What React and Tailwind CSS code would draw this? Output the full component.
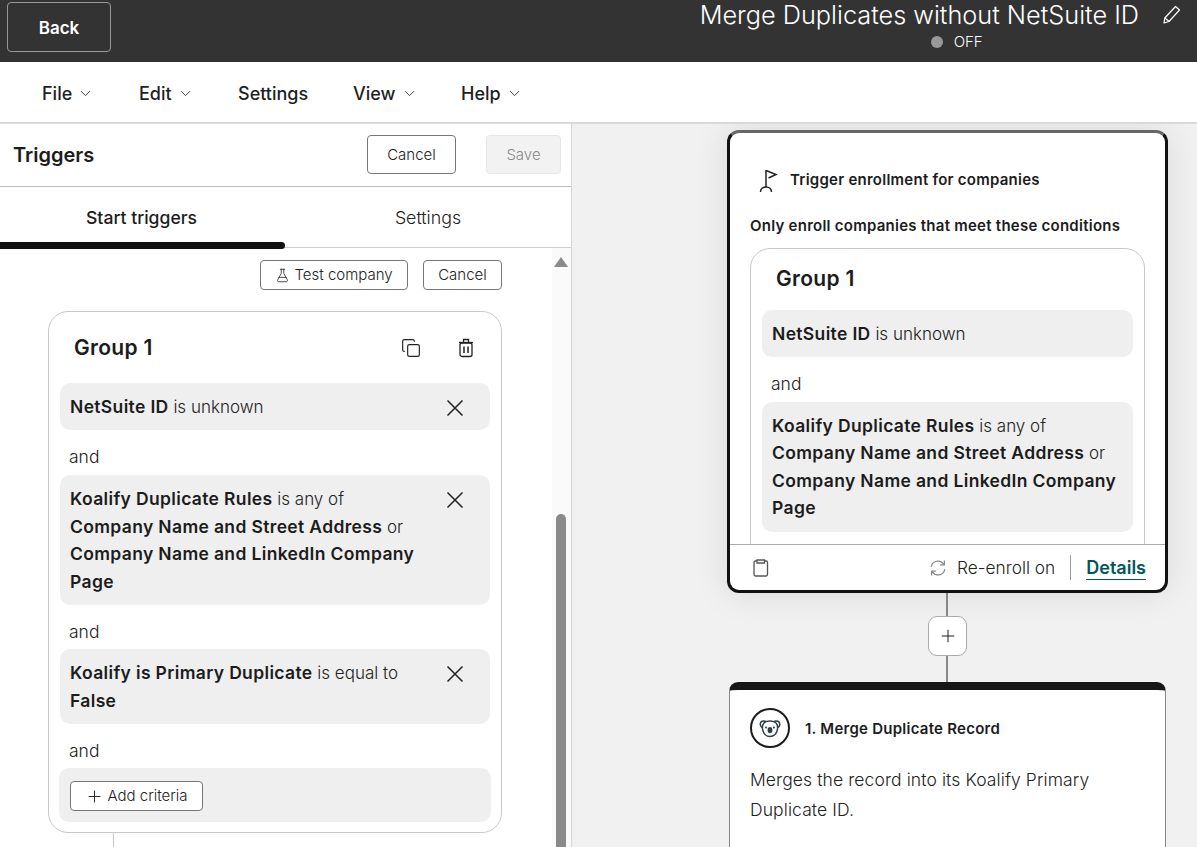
import React from "react";
import { ChevronDown, Plus, FlaskConical, Copy } from "lucide-react";

const FONT = "font-['Inter','Noto_Sans',sans-serif]";

function PencilIcon() {
  return (
    <svg width="19" height="19" viewBox="0 0 19 19" fill="none" stroke="#fff" strokeWidth="1.200" className="mt-[5px] shrink-0">
      <path d="M13.500 1.500l4 3.500L7 16.500l-5 1.500.8-5z" strokeLinejoin="round" />
      <path d="M3 13l4 3.500" />
    </svg>
  );
}

function CloseIcon() {
  return (
    <svg width="18" height="18" viewBox="0 0 18 18" fill="none" stroke="#222" strokeWidth="1.500" className="mt-[5px] shrink-0">
      <path d="M1.500 1.500l15 15M16.500 1.500l-15 15" />
    </svg>
  );
}

function FlagIcon() {
  return (
    <svg width="20" height="24" viewBox="0 0 20 24" fill="none" stroke="#222" strokeWidth="1.500" className="shrink-0">
      <path d="M8 1v17" />
      <path d="M8 1.500L18 5.500L10.500 9" />
      <path d="M2.500 23c0-3 2.400-5 5.500-5s5.500 2 5.500 5" />
    </svg>
  );
}

function TrashIcon() {
  return (
    <svg width="16" height="20" viewBox="0 0 16 20" fill="none" stroke="#222" strokeWidth="1.300" className="shrink-0">
      <rect x="2" y="5" width="12" height="13.500" rx="2" />
      <path d="M1 4.500h14" />
      <path d="M5.500 4V1.500h5V4" />
      <path d="M6 8.500v6.500M10 8.500v6.500" strokeWidth="1.500" />
    </svg>
  );
}

function Clipboard() {
  return (
    <svg width="16" height="18" viewBox="0 0 16 18" fill="none" stroke="#555" strokeWidth="1.300">
      <rect x="1" y="2" width="13.500" height="15" rx="1.400" />
      <path d="M4 1h7.500v3H4z" fill="#fff" />
    </svg>
  );
}

function Refresh() {
  return (
    <svg width="18" height="18" viewBox="0 0 17 17" fill="none" stroke="#888" strokeWidth="1.200">
      <path d="M2 7.500C2.600 4.400 5.200 2 8.500 2c2.300 0 4.200 1.100 5.400 2.900" />
      <path d="M15 9.500c-.6 3.100-3.200 5.500-6.500 5.500-2.300 0-4.200-1.100-5.400-2.900" />
      <path d="M14.500 1.500v4h-4" />
      <path d="M2.500 15.500v-4h4" />
    </svg>
  );
}

function Koala() {
  return (
    <svg width="22" height="19" viewBox="0 0 20 18" fill="none" stroke="#2e3f4a" strokeWidth="1.400">
      <circle cx="4" cy="5" r="3.200" />
      <circle cx="16" cy="5" r="3.200" />
      <path d="M4.500 3.500C6 2.500 8 2 10 2s4 .5 5.500 1.500C17 5 17.500 7.500 17 10c-.8 3.800-3.500 6.500-7 6.500S3.800 13.800 3 10c-.5-2.500 0-5 1.500-6.500z" fill="#fff" />
      <ellipse cx="10" cy="10.500" rx="2.300" ry="3" fill="#2e3f4a" stroke="none" />
      <circle cx="6.300" cy="8" r="1" fill="#2e3f4a" stroke="none" />
      <circle cx="13.700" cy="8" r="1" fill="#2e3f4a" stroke="none" />
    </svg>
  );
}

function MenuItem({ label, chevron = true, className = "" }) {
  return (
    <div className={`flex items-center gap-[5px] text-[18px] font-medium text-[#1f1f1f] ${className}`}>
      <span>{label}</span>
      {chevron && <ChevronDown size={17} strokeWidth={1.200} />}
    </div>
  );
}

function B({ children }) {
  return <span className="text-[17.500px] leading-none font-semibold tracking-[0.35px] text-[#1c1c1c]">{children}</span>;
}

function Rule({ children, close = true, className = "" }) {
  return (
    <div className={`flex items-start justify-between rounded-[10px] bg-[#efefef] pt-[11px] pr-[26px] pl-[10px] text-[17px] leading-[27.500px] font-light whitespace-nowrap text-[#222] ${className}`}>
      <div>{children}</div>
      {close && <CloseIcon />}
    </div>
  );
}

function And({ className = "" }) {
  return <div className={`pl-[9px] text-[17.500px] leading-[27px] font-light text-[#222] ${className}`}>and</div>;
}

export default function App() {
  return (
    <div className={`flex h-[847px] w-[1197px] flex-col overflow-hidden bg-white ${FONT}`}>
      <header className="flex h-[62px] shrink-0 items-start justify-between bg-[#333333] pr-[16px] pl-[7px]">
        <button className="mt-[2px] flex h-[50px] w-[104px] items-center justify-center rounded-[4px] border border-[#999] pt-[3px] text-[17px] font-semibold text-white">
          Back
        </button>
        <div className="flex flex-col">
          <div className="flex items-start gap-[23px]">
            <span className="text-[25.300px] leading-[29px] font-light whitespace-nowrap text-white">Merge Duplicates without NetSuite ID</span>
            <PencilIcon />
          </div>
          <div className="mt-[4px] ml-[231px] flex items-center gap-[11px] text-[15px] leading-[18px] font-light text-white">
            <span className="h-[12px] w-[12px] rounded-full bg-[#999]" />
            <span>OFF</span>
          </div>
        </div>
      </header>

      <nav className="flex h-[62px] shrink-0 items-center border-b-2 border-[#d9d9d9] pt-[2px] pl-[42px]">
        <MenuItem label="File" className="w-[97px]" />
        <MenuItem label="Edit" className="w-[99px]" />
        <MenuItem label="Settings" chevron={false} className="w-[115px]" />
        <MenuItem label="View" className="w-[108px]" />
        <MenuItem label="Help" />
      </nav>

      <main className="flex min-h-0 flex-1">
        <section className="flex w-[572px] shrink-0 flex-col border-r border-[#d4d4d4] bg-white">
          <div className="flex h-[63px] shrink-0 items-center border-b border-[#bdbdbd] pr-[10px] pl-[13px]">
            <h1 className="flex-1 text-[20px] font-semibold text-[#1c1c1c]">Triggers</h1>
            <button className="mr-[30px] mb-[2px] h-[39px] w-[89px] rounded-[4px] border border-[#777] pt-[2px] text-[15px] font-light text-[#222]">Cancel</button>
            <button className="mb-[2px] h-[39px] w-[75px] rounded-[4px] border border-[#e6e6e6] bg-[#f2f2f2] pt-[2px] text-[15px] font-light text-[#888]">Save</button>
          </div>

          <div className="relative flex h-[61px] shrink-0 border-b border-[#cfcfcf]">
            <div className="flex w-[283px] items-center justify-center pt-[3px] text-[17.600px] font-medium text-[#1c1c1c]">Start triggers</div>
            <div className="flex w-[288px] items-center justify-center pt-[3px] pl-[2px] text-[17.800px] font-light text-[#222]">Settings</div>
            <div className="absolute bottom-[-2px] left-0 h-[7px] w-[285px] rounded-r-full bg-[#111]" />
          </div>

          <div className="flex min-h-0 flex-1">
            <div className="min-w-0 flex-1 pt-[12px] pl-[48px]">
              <div className="flex justify-end gap-[15px] pr-[50px]">
                <button className="flex h-[30px] w-[148px] items-center justify-center gap-[4px] rounded-[4px] border border-[#777] text-[15px] font-light text-[#222]">
                  <FlaskConical size={15} strokeWidth={1.300} />
                  Test company
                </button>
                <button className="h-[30px] w-[79px] rounded-[4px] border border-[#777] text-[15px] font-light text-[#222]">Cancel</button>
              </div>

              <div className="mt-[21px] flex h-[522px] w-[454px] flex-col rounded-[20px] border border-[#c8c8c8] px-[11px]">
                <div className="flex h-[71px] shrink-0 items-center pr-[16px] pl-[14px]">
                  <h2 className="flex-1 text-[21px] font-semibold tracking-[0.3px] text-[#1c1c1c]">Group 1</h2>
                  <Copy size={20} strokeWidth={1.400} className="mr-[37px] text-[#222]" />
                  <TrashIcon />
                </div>
                <Rule className="h-[47px]">
                  <B>NetSuite ID</B> is unknown
                </Rule>
                <And className="pt-[13px] pb-[5px]" />
                <Rule className="h-[130px]">
                  <B>Koalify Duplicate Rules</B> is any of
                  <br />
                  <B>Company Name and Street Address</B> or
                  <br />
                  <B>Company Name and LinkedIn Company</B>
                  <br />
                  <B>Page</B>
                </Rule>
                <And className="pt-[13px] pb-[4px]" />
                <Rule className="h-[75px]">
                  <B>Koalify is Primary Duplicate</B> is equal to
                  <br />
                  <B>False</B>
                </Rule>
                <And className="pt-[13px] pb-[4px]" />
                <div className="-mx-[1px] flex h-[54px] items-start rounded-[10px] bg-[#efefef] pt-[13px] pl-[11px]">
                  <button className="flex h-[30px] w-[133px] items-center justify-center gap-[3px] rounded-[4px] border border-[#777] bg-white text-[15px] font-light text-[#222]">
                    <Plus size={19} strokeWidth={1.200} />
                    Add criteria
                  </button>
                </div>
              </div>
              <div className="ml-[65px] h-[14px] w-px bg-[#c8c8c8]" />
            </div>

            <div className="relative w-[19px] shrink-0 bg-[#fafafa]">
              <div className="absolute top-[9px] left-[2px] h-0 w-0 border-x-[7px] border-b-[10px] border-x-transparent border-b-[#8a8a8a]" />
              <div className="absolute top-[266px] left-[4px] h-[340px] w-[10px] rounded-t-full bg-[#8a8a8a]" />
            </div>
          </div>
        </section>

        <section className="min-w-0 flex-1 overflow-hidden bg-[#f1f1f1] pt-[6px] pl-[155px]">
          <div className="flex h-[463px] w-[441px] flex-col overflow-hidden rounded-[12px] border-[3px] border-[#111] border-t-[#666] bg-white shadow-[0_0_36px_rgba(0,0,0,0.1)]">
            <div className="min-h-0 flex-1 overflow-hidden">
              <div className="flex items-center gap-[12px] pt-[36px] pl-[28px]">
                <FlagIcon />
                <span className="pb-[2px] text-[15px] font-semibold tracking-[0.25px] text-[#1c1c1c]">Trigger enrollment for companies</span>
              </div>
              <div className="mt-[21px] pl-[20px] text-[15px] leading-[22px] font-semibold tracking-[0.25px] text-[#1c1c1c]">Only enroll companies that meet these conditions</div>
              <div className="mt-[11px] ml-[20px] h-[330px] w-[395px] rounded-t-[20px] border border-[#c8c8c8] px-[11px]">
                <h2 className="flex h-[61px] items-center pl-[14px] text-[21px] font-semibold tracking-[0.3px] text-[#1c1c1c]">Group 1</h2>
                <Rule close={false} className="h-[47px]">
                  <B>NetSuite ID</B> is unknown
                </Rule>
                <And className="pt-[13px] pb-[5px]" />
                <Rule close={false} className="h-[130px]">
                  <B>Koalify Duplicate Rules</B> is any of
                  <br />
                  <B>Company Name and Street Address</B> or
                  <br />
                  <B>Company Name and LinkedIn Company</B>
                  <br />
                  <B>Page</B>
                </Rule>
              </div>
            </div>
            <div className="flex h-[46px] shrink-0 items-center border-t border-[#aaa] pr-[19px] pl-[23px]">
              <Clipboard />
              <div className="ml-auto flex items-center gap-[10px] text-[17.300px] font-light text-[#222]">
                <Refresh />
                <span>Re-enroll on</span>
              </div>
              <div className="mr-[15px] ml-[15px] h-[25px] w-px bg-[#999]" />
              <span className="mt-[2px] border-b border-[#00565b] text-[18px] leading-[22px] font-semibold text-[#00565b]">Details</span>
            </div>
          </div>

          <div className="ml-[219px] h-[23px] w-[2px] bg-[#888]" />
          <div className="ml-[201px] flex h-[40px] w-[39px] items-center justify-center rounded-[9px] border border-[#aaa] bg-white">
            <Plus size={20} strokeWidth={1.200} className="text-[#222]" />
          </div>
          <div className="ml-[219px] h-[26px] w-[2px] bg-[#888]" />

          <div className="ml-[2px] h-[300px] w-[437px] rounded-t-[9px] border border-t-[8px] border-[#888] border-t-[#161616] bg-white pt-[18px] pl-[20px]">
            <div className="flex items-center gap-[15px]">
              <div className="flex h-[40px] w-[40px] items-center justify-center rounded-full border-2 border-[#1c1c1c]">
                <Koala />
              </div>
              <span className="pt-[2px] text-[15px] font-semibold tracking-[0.25px] text-[#1c1c1c]">1. Merge Duplicate Record</span>
            </div>
            <p className="mt-[17px] w-[370px] text-[17.500px] leading-[30px] font-light tracking-[0.1px] text-[#222]">Merges the record into its Koalify Primary Duplicate ID.</p>
          </div>
        </section>
      </main>
    </div>
  );
}
